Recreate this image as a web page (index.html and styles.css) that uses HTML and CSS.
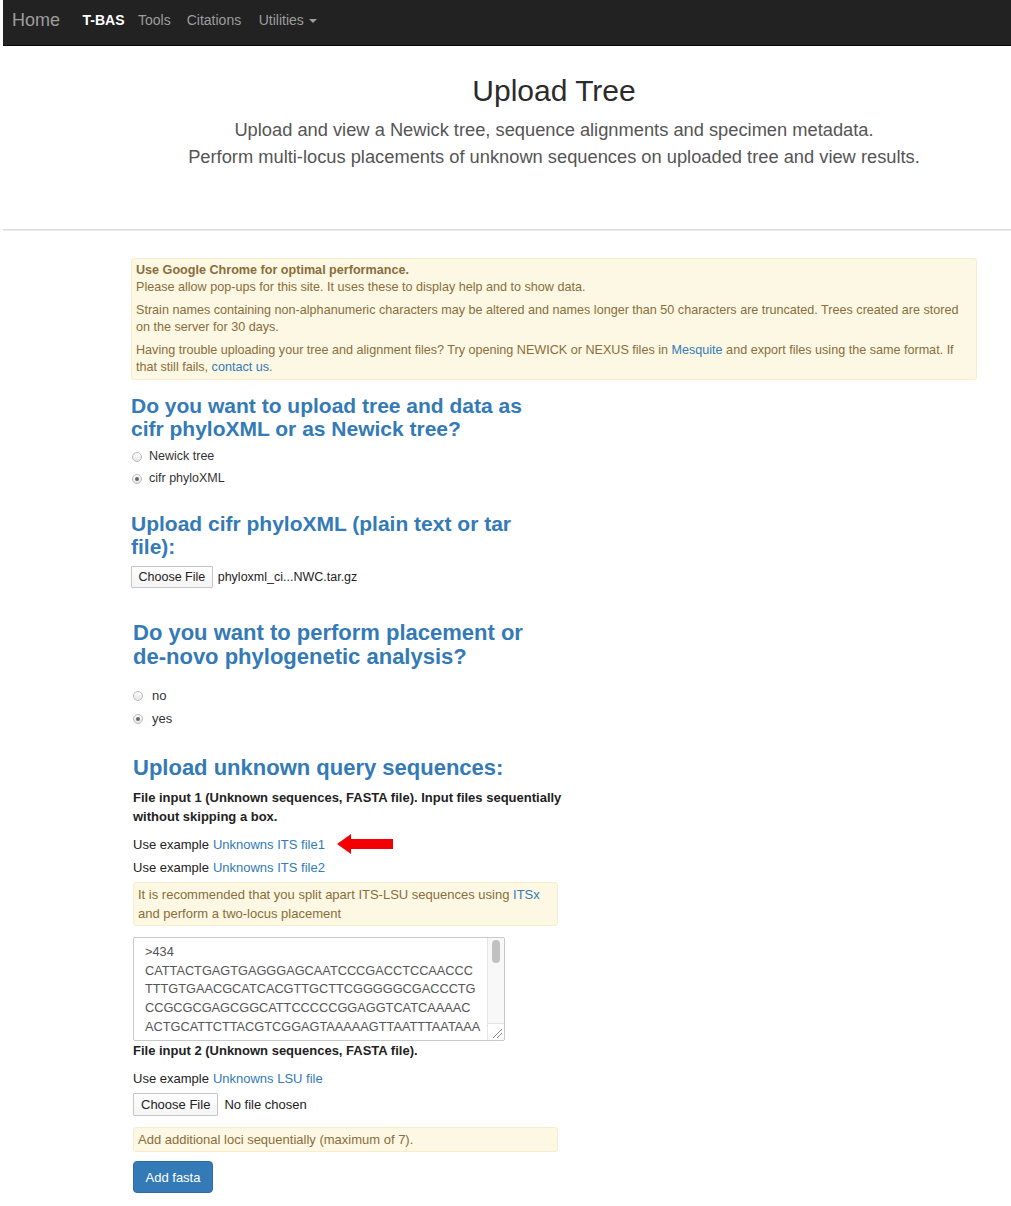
FILE: index.html
```html
<!DOCTYPE html>
<html>
<head>
<meta charset="utf-8">
<title>Upload Tree</title>
<link rel="stylesheet" href="styles.css">
</head>
<body>
<nav class="navbar">
  <a class="brand" href="#">Home</a>
  <ul class="nav-items">
    <li class="active"><a href="#">T-BAS</a></li>
    <li><a href="#">Tools</a></li>
    <li><a href="#">Citations</a></li>
    <li><a href="#">Utilities <span class="caret"></span></a></li>
  </ul>
</nav>

<div class="container">
  <header class="page-header">
    <h1 class="title">Upload Tree</h1>
    <p class="lead">Upload and view a Newick tree, sequence alignments and specimen metadata.<br>Perform multi-locus placements of unknown sequences on uploaded tree and view results.</p>
  </header>
</div>
<hr class="divider">

<div class="container">
  <div class="alert alert-top">
    <div class="strong">Use Google Chrome for optimal performance.</div>
    <p>Please allow pop-ups for this site. It uses these to display help and to show data.</p>
    <p>Strain names containing non-alphanumeric characters may be altered and names longer than 50 characters are truncated. Trees created are stored on the server for 30 days.</p>
    <p class="last">Having trouble uploading your tree and alignment files? Try opening NEWICK or NEXUS files in <a href="#">Mesquite</a> and export files using the same format. If that still fails, <a href="#">contact us</a>.</p>
  </div>

  <section class="upper">
    <h3 class="q h-first">Do you want to upload tree and data as<br>cifr phyloXML or as Newick tree?</h3>
    <div class="radios small">
      <label class="radio"><input type="radio" name="fmt"> Newick tree</label>
      <label class="radio"><input type="radio" name="fmt" checked> cifr phyloXML</label>
    </div>

    <h3 class="q h-second">Upload cifr phyloXML (plain text or tar<br>file):</h3>
    <div class="file-row small">
      <button class="file-btn">Choose File</button><span class="file-name">phyloxml_ci...NWC.tar.gz</span>
    </div>
  </section>

  <section class="lower">
    <h3 class="q big h-third">Do you want to perform placement or<br>de-novo phylogenetic analysis?</h3>
    <div class="radios">
      <label class="radio"><input type="radio" name="pl"> no</label>
      <label class="radio"><input type="radio" name="pl" checked> yes</label>
    </div>

    <h3 class="q big h-fourth">Upload unknown query sequences:</h3>
    <p class="field-label fl1">File input 1 (Unknown sequences, FASTA file). Input files sequentially<br>without skipping a box.</p>
    <p class="example ex1">Use example <a href="#">Unknowns ITS file1</a><svg class="arrow" width="56" height="22" viewBox="0 0 56 22"><polygon points="0,11 14,1 14,6 56,6 56,16 14,16 14,21" fill="#f40000"/></svg></p>
    <p class="example ex2">Use example <a href="#">Unknowns ITS file2</a></p>
    <div class="alert alert-small alert-two">It is recommended that you split apart ITS-LSU sequences using <a href="#">ITSx</a><br>and perform a two-locus placement</div>
    <div class="seq-wrap">
      <textarea class="seq" spellcheck="false">&gt;434
CATTACTGAGTGAGGGAGCAATCCCGACCTCCAACCC
TTTGTGAACGCATCACGTTGCTTCGGGGGCGACCCTG
CCGCGCGAGCGGCATTCCCCCGGAGGTCATCAAAAC
ACTGCATTCTTACGTCGGAGTAAAAAGTTAATTTAATAAA
ACTTTCAACAACGGATCTCTTGGTTCTGGCATCGATGAA
GAACGCAGCGAAATGCGATAAGTAATGTGAATTGCAG
AATTCAGTGAATCATCGAATCTTTGAACGCACATTGCG
CCCCTTGGTATTCCGAGGGGCATGCCTGTTCGAGCGTC
ATTTCAACCCTCAAGCCCTGCTTGGTGTTGGGGCCCTA
CGGCTGCCGTAGGCCCTGAAATACAGTGGCGGGCTCG
CTAGAACACCGAGCGTAGTAACATATCTCGCTCTGGAG
GCCCTGGCGGAGCCCGGCCGTTAAACCCCCAATTTCTA
AAGGTTGACCTCGGATCAGGTAGGAATACCCGCTGAA
CTTAAGCATATCAATAAGCGGAGGA</textarea>
      <div class="scrollbar" aria-hidden="true">
        <div class="thumb"></div>
        <div class="resizer"><svg width="16" height="16" viewBox="0 0 16 16"><path d="M5 14 L14 5 M9 14 L14 9" stroke="#8a8a8a" stroke-width="1" fill="none"/></svg></div>
      </div>
    </div>
    <p class="field-label fl2">File input 2 (Unknown sequences, FASTA file).</p>
    <p class="example ex3">Use example <a href="#">Unknowns LSU file</a></p>
    <div class="file-row file-row-lower">
      <button class="file-btn">Choose File</button><span class="file-name">No file chosen</span>
    </div>
    <div class="alert alert-small alert-three">Add additional loci sequentially (maximum of 7).</div>
    <button class="btn-primary">Add fasta</button>
  </section>
</div>
</body>
</html>
```

FILE: styles.css
```css
* { box-sizing: border-box; }

html, body {
  margin: 0;
  padding: 0;
  background: #fff;
}

body {
  margin-left: 3px;
  font-family: "Liberation Sans", Arial, sans-serif;
  color: #333;
  font-size: 13px;
}

a { color: #337ab7; text-decoration: none; }

/* navbar */
.navbar {
  height: 46px;
  background: #222;
  border-bottom: 1px solid #080808;
  display: flex;
  align-items: center;
  padding: 0 0 5px 9px;
}

.brand {
  color: #9d9d9d;
  font-size: 18px;
  margin-right: 15px;
  margin-top: 1px;
}

.nav-items {
  list-style: none;
  display: flex;
  margin: 0;
  padding: 0;
}

.nav-items li a {
  display: block;
  color: #9d9d9d;
  font-size: 14px;
  padding: 0 7.5px;
}

.nav-items li:nth-child(2) a { padding-left: 6px; }
.nav-items li:nth-child(3) a { padding-left: 8.5px; }
.nav-items li:nth-child(4) a { padding-left: 10px; }

.nav-items li.active a {
  color: #fff;
  font-weight: bold;
}

.caret {
  display: inline-block;
  width: 0;
  height: 0;
  margin-left: 1px;
  vertical-align: middle;
  border-top: 4px solid #9d9d9d;
  border-left: 4px solid transparent;
  border-right: 4px solid transparent;
}

/* container */
.container {
  width: 846px;
  margin-left: 128px;
}

.page-header {
  text-align: center;
  padding-top: 28px;
}

.title {
  font-size: 30px;
  line-height: 33px;
  font-weight: normal;
  color: #2b2b2b;
  margin: 0;
}

.lead {
  font-size: 18.3px;
  line-height: 27px;
  color: #555;
  margin: 9px 0 0;
}

.divider {
  margin: 59px 0 0;
  border: 0;
  border-top: 1px solid #dcdcdc;
  border-bottom: 1px solid #ececec;
  height: 2px;
}

/* alerts */
.alert {
  background: #fcf8e3;
  border: 1px solid #faebcc;
  color: #8a6d3b;
  border-radius: 3px;
}

.alert-top {
  margin-top: 27px;
  font-size: 12.6px;
  line-height: 17.6px;
  padding: 2.5px 4px 2px;
}

.alert-top .strong { font-weight: bold; }

.alert-top p { margin: 0 0 5px; }
.alert-top p.last { margin-bottom: 0; }

.alert-small {
  width: 425px;
  font-size: 13px;
  line-height: 19px;
  padding: 2px 4px;
}

/* headings */
.q {
  color: #337ab7;
  font-weight: bold;
  font-size: 21px;
  line-height: 23px;
  margin: 0;
}

.q.big {
  font-size: 22px;
  line-height: 24px;
}

.h-first { margin-top: 14px; }
.h-second { margin-top: 25px; }
.h-third { margin-top: 33px; }
.h-fourth { margin-top: 28px; font-size: 21.7px; }

/* radios */
.radios {
  display: flex;
  flex-direction: column;
  gap: 5px;
  margin-top: 18px;
  font-size: 13px;
  line-height: 18px;
}

.radios.small {
  margin-top: 8px;
  font-size: 12.5px;
  line-height: 17px;
}

.radio {
  display: flex;
  align-items: center;
  color: #333;
}

.radio input {
  -webkit-appearance: none;
  appearance: none;
  width: 10px;
  height: 10px;
  margin: 0 9px 0 0;
  border-radius: 50%;
  border: 1px solid #b9b9b9;
  background: linear-gradient(#fdfdfd, #e6e6e6);
  position: relative;
}

.radios.small .radio input { margin-left: 1px; margin-right: 7px; }

.radio input:checked::after {
  content: "";
  position: absolute;
  left: 2px;
  top: 2px;
  width: 4px;
  height: 4px;
  border-radius: 50%;
  background: #666;
}

/* file input */
.file-row {
  display: flex;
  align-items: center;
  margin-top: 8px;
  font-size: 12.5px;
}

.file-btn {
  font-family: "Liberation Sans", Arial, sans-serif;
  font-size: 12.5px;
  color: #222;
  height: 22px;
  padding: 0 6.5px;
  background: linear-gradient(#fff, #f4f4f4);
  border: 1px solid #c6c6c6;
  border-radius: 1px;
}

.file-name {
  margin-left: 5px;
  color: #222;
}

.file-row-lower {
  margin-top: 5px;
  font-size: 13px;
}

.file-row-lower .file-btn {
  font-size: 13px;
  height: 23px;
  padding: 0 7px;
}

.file-row-lower .file-name { margin-left: 6px; }

/* lower section */
.lower { padding-left: 2px; }

.field-label {
  font-weight: bold;
  font-size: 13px;
  line-height: 19px;
  margin: 0;
  color: #222;
}

.fl1 { margin-top: 8px; }
.fl2 { margin-top: 0; }

.example {
  margin: 0;
  font-size: 13px;
  line-height: 19px;
  color: #222;
  display: flex;
  align-items: center;
}

.ex1 { margin-top: 7px; }
.ex2 { margin-top: 3px; }
.ex3 { margin-top: 9px; }

.example a { margin-left: 4px; }

.arrow {
  margin-left: 12px;
}

.alert-two { margin-top: 5px; }
.alert-three { margin-top: 11px; }

.seq-wrap {
  position: relative;
  width: 372px;
  height: 104px;
  margin-top: 11px;
}

.seq {
  display: block;
  width: 100%;
  height: 100%;
  margin: 0;
  padding: 5px 20px 0 11px;
  border: 1px solid #c9c9c9;
  border-radius: 2px;
  font-family: "Liberation Sans", Arial, sans-serif;
  font-size: 12.75px;
  line-height: 18.7px;
  color: #555;
  resize: none;
  overflow: hidden;
  outline: none;
}

.scrollbar {
  position: absolute;
  top: 1px;
  right: 1px;
  bottom: 1px;
  width: 17px;
  background: #f8f8f8;
  border-left: 1px solid #e4e4e4;
}

.thumb {
  width: 8px;
  height: 23px;
  margin: 2px 0 0 4px;
  border-radius: 4px;
  background: #c1c1c1;
}

.resizer {
  position: absolute;
  left: -1px;
  right: 0;
  bottom: 0;
  height: 17px;
  background: #fff;
  border-top: 1px solid #e4e4e4;
  border-left: 1px solid #e4e4e4;
}

.resizer svg { display: block; }

.btn-primary {
  display: block;
  margin-top: 9px;
  width: 80px;
  height: 32px;
  background: #337ab7;
  border: 1px solid #2e6da4;
  border-radius: 4px;
  color: #fff;
  font-family: "Liberation Sans", Arial, sans-serif;
  font-size: 13px;
  padding: 0;
}
```
